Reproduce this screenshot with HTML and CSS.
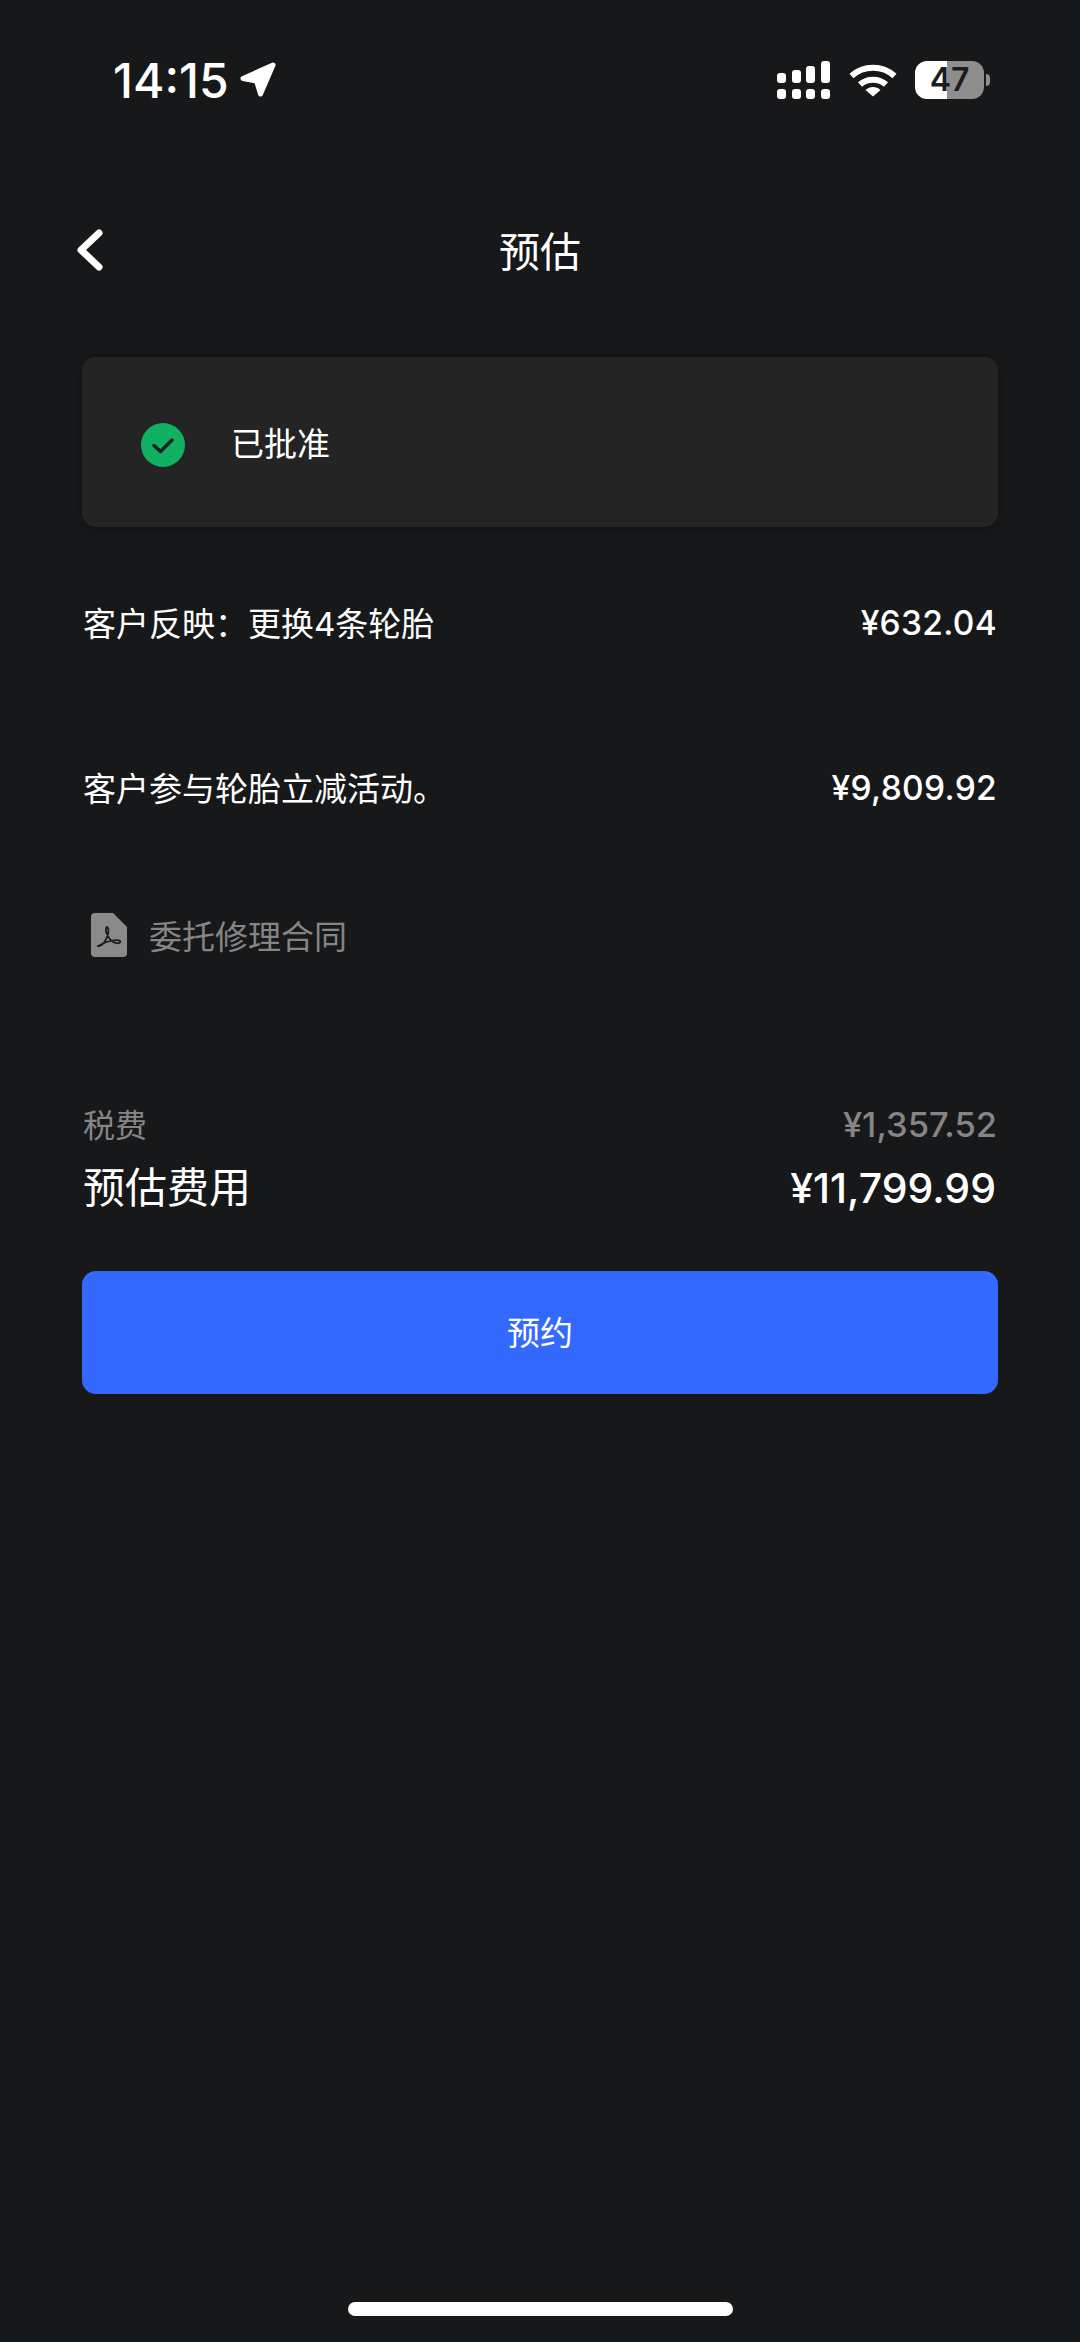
FILE: index.html
```html
<!DOCTYPE html>
<html lang="zh-CN">
<head>
    <meta charset="UTF-8">
    <meta name="viewport" content="width=device-width, initial-scale=1.0">
    <title>预估</title>
    <link rel="stylesheet" href="styles.css">
</head>
<body>
<div class="screen">
    <div class="status-bar">
        <div class="status-left">
            <span class="time">14:15</span>
            <svg class="location" viewBox="0 0 36 36"><path d="M33 3 3 16.500 16.500 19 20.500 32Z" fill="#fff" stroke="#fff" stroke-width="5" stroke-linejoin="round"/></svg>
        </div>
        <div class="status-right">
            <svg class="signal" viewBox="0 0 54 38" fill="#fff">
                <rect x="0" y="12" width="9" height="10" rx="3"/>
                <rect x="15" y="9" width="9" height="13" rx="3"/>
                <rect x="29" y="5" width="9" height="17" rx="3"/>
                <rect x="44" y="0" width="9" height="22" rx="3"/>
                <rect x="0" y="28" width="9" height="10" rx="3"/>
                <rect x="15" y="28" width="9" height="10" rx="3"/>
                <rect x="29" y="28" width="9" height="10" rx="3"/>
                <rect x="44" y="28" width="9" height="10" rx="3"/>
            </svg>
            <svg class="wifi" viewBox="0 0 48 34" fill="none" stroke="#fff" stroke-width="6">
                <path d="M2.500 13C14.500 2 33.500 2 45.500 13"/>
                <path d="M11 21.500C18 15 30 15 37 21.500"/>
                <path d="M24 33.500 16.500 27C20.500 23 27.500 23 31.500 27Z" fill="#fff" stroke="none"/>
            </svg>
            <div class="battery">
                <div class="battery-body">47</div>
                <div class="battery-nub"></div>
            </div>
        </div>
    </div>

    <div class="nav">
        <svg class="back" viewBox="0 0 26 42" fill="none" stroke="#fff" stroke-width="7" stroke-linecap="round" stroke-linejoin="round"><path d="M22 4 4 21l18 17"/></svg>
        <h1>预估</h1>
    </div>

    <div class="status-card">
        <svg class="ok-icon" viewBox="0 0 44 44">
            <circle cx="22" cy="22" r="22" fill="#10b261"/>
            <path d="M13 22.500l6.500 6L31 17" fill="none" stroke="#1a2420" stroke-width="3.500" stroke-linecap="round" stroke-linejoin="round"/>
        </svg>
        <span>已批准</span>
    </div>

    <div class="line-item first">
        <span class="label">客户反映：更换4条轮胎</span>
        <span class="amount">¥632.04</span>
    </div>
    <div class="line-item second">
        <span class="label">客户参与轮胎立减活动。</span>
        <span class="amount">¥9,809.92</span>
    </div>

    <div class="doc-link">
        <svg class="pdf-icon" viewBox="0 0 36 44">
            <path d="M4 0h18l14 14v26a4 4 0 0 1-4 4H4a4 4 0 0 1-4-4V4a4 4 0 0 1 4-4Z" fill="#8a8a8a"/>
            <path d="M7 33c4 1 8-5 10-12 1-4 0-7-1-7s-2 3 0 7c2 5 6 9 9 9 3 1 5-1 4-2-2-2-13 0-18 3-3 1-5 3-4 2Z" fill="none" stroke="#1c1c1e" stroke-width="1.800"/>
        </svg>
        <span>委托修理合同</span>
    </div>

    <div class="tax-row">
        <span class="label">税费</span>
        <span class="amount">¥1,357.52</span>
    </div>
    <div class="total-row">
        <span class="label">预估费用</span>
        <span class="amount">¥11,799.99</span>
    </div>

    <button class="book-btn" type="button">预约</button>

    <div class="home-bar"></div>
</div>
</body>
</html>
```

FILE: styles.css
```css
body {
    margin: 0;
    padding: 0;
    background-color: #17181a;
    color: #fff;
    font-family: Inter, "Noto Sans CJK SC", sans-serif;
}
.screen {
    display: flex;
    flex-direction: column;
    height: 2342px;
    box-sizing: border-box;
    padding: 0 82px;
    overflow: hidden;
}
.status-bar {
    display: flex;
    justify-content: space-between;
    align-items: center;
    height: 160px;
    margin: 0 8px 45px 31px;
}
.status-left {
    display: flex;
    align-items: center;
    gap: 11px;
}
.time {
    font-size: 48px;
    font-weight: 500;
}
.location {
    width: 36px;
    height: 36px;
}
.status-right {
    display: flex;
    align-items: center;
    gap: 18px;
}
.signal {
    width: 54px;
    height: 38px;
}
.wifi {
    width: 48px;
    height: 34px;
}
.battery {
    display: flex;
    align-items: center;
    gap: 2px;
}
.battery-body {
    width: 69px;
    height: 38px;
    line-height: 38px;
    border-radius: 12px;
    background: linear-gradient(to right, #fff 46%, #8e8e8e 46%);
    color: #1c1c1e;
    font-size: 32px;
    font-weight: 600;
    text-align: center;
}
.battery-nub {
    width: 4px;
    height: 12px;
    border-radius: 0 4px 4px 0;
    background: #8e8e8e;
}
.nav {
    display: flex;
    align-items: center;
    justify-content: center;
    height: 90px;
    margin-bottom: 62px;
    position: relative;
}
.nav h1 {
    margin: 0;
    padding-bottom: 3px;
    font-size: 41px;
    font-weight: 400;
}
.back {
    position: absolute;
    left: -5px;
    top: 24px;
    width: 26px;
    height: 42px;
}
.status-card {
    display: flex;
    align-items: center;
    gap: 46px;
    height: 170px;
    padding-left: 59px;
    background: #242424;
    border-radius: 14px;
    box-shadow: 0 2px 14px rgba(0, 0, 0, 0.25);
    font-size: 33px;
}
.ok-icon {
    width: 44px;
    height: 44px;
    margin-top: 6px;
}
.line-item,
.tax-row,
.total-row {
    display: flex;
    justify-content: space-between;
    align-items: center;
}
.label {
    margin-left: 1px;
    padding-bottom: 3px;
}
.line-item {
    font-size: 33px;
    height: 60px;
}
.line-item .amount {
    margin-right: 1px;
    font-size: 33.5px;
    font-weight: 500;
    letter-spacing: 0.3px;
}
.line-item.first {
    margin-top: 66px;
}
.line-item.second {
    margin-top: 105px;
}
.doc-link {
    display: flex;
    align-items: center;
    gap: 22px;
    margin-top: 93px;
    padding-left: 9px;
    color: #858585;
    font-size: 33px;
}
.pdf-icon {
    width: 36px;
    height: 44px;
}
.tax-row {
    margin-top: 140px;
    height: 50px;
    color: #858585;
    font-size: 32px;
}
.tax-row .amount {
    margin-right: 1px;
    font-size: 34.5px;
    font-weight: 500;
}
.total-row {
    margin-top: 5px;
    height: 64px;
    font-size: 42px;
}
.total-row .amount {
    margin-right: 2px;
    padding-top: 4px;
    font-size: 41px;
    font-weight: 500;
}
.book-btn {
    width: 100%;
    height: 123px;
    margin-top: 53px;
    padding: 0 0 4px;
    background-color: #3369ff;
    color: #fff;
    border: none;
    border-radius: 14px;
    font-family: inherit;
    font-size: 33px;
}
.home-bar {
    align-self: center;
    width: 385px;
    height: 14px;
    margin-top: auto;
    margin-bottom: 26px;
    background: #fff;
    border-radius: 7px;
}
```
